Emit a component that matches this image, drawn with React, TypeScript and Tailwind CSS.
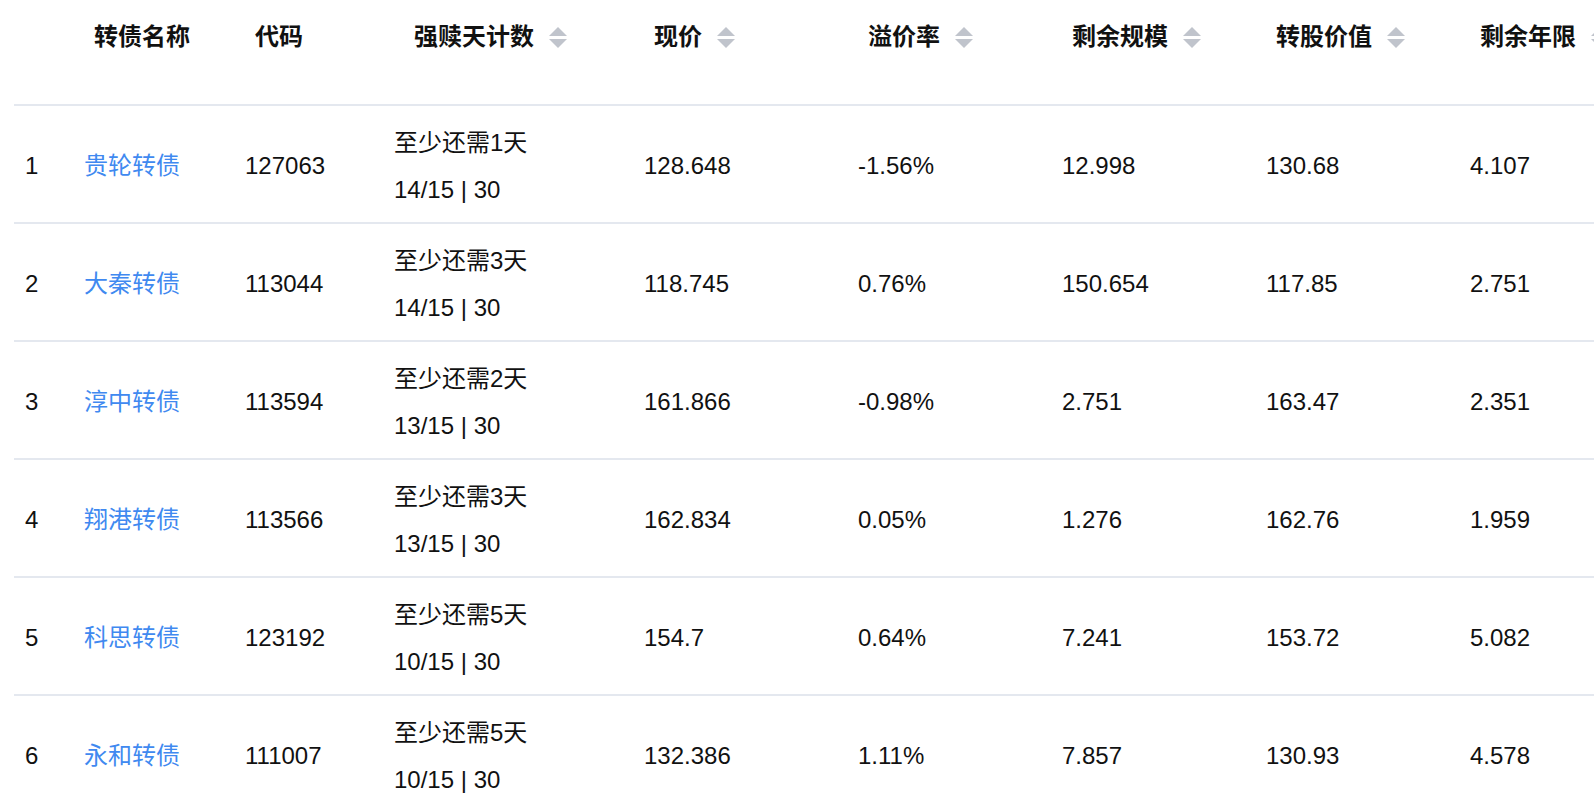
const rows = [
  { name: '贵轮转债', code: '127063', need: '至少还需1天', count: '14/15 | 30', price: '128.648', premium: '-1.56%', size: '12.998', value: '130.68', years: '4.107' },
  { name: '大秦转债', code: '113044', need: '至少还需3天', count: '14/15 | 30', price: '118.745', premium: '0.76%', size: '150.654', value: '117.85', years: '2.751' },
  { name: '淳中转债', code: '113594', need: '至少还需2天', count: '13/15 | 30', price: '161.866', premium: '-0.98%', size: '2.751', value: '163.47', years: '2.351' },
  { name: '翔港转债', code: '113566', need: '至少还需3天', count: '13/15 | 30', price: '162.834', premium: '0.05%', size: '1.276', value: '162.76', years: '1.959' },
  { name: '科思转债', code: '123192', need: '至少还需5天', count: '10/15 | 30', price: '154.7', premium: '0.64%', size: '7.241', value: '153.72', years: '5.082' },
  { name: '永和转债', code: '111007', need: '至少还需5天', count: '10/15 | 30', price: '132.386', premium: '1.11%', size: '7.857', value: '130.93', years: '4.578' },
]

const cols = 'grid grid-cols-[59px_161px_149px_250px_214px_204px_204px_204px_204px]'

function SortCaret() {
  return (
    <span className="ml-[15px] inline-flex flex-col items-center gap-[3px]">
      <span className="block h-0 w-0 border-x-[9px] border-b-[9px] border-x-transparent border-b-[#c0c4cc]" />
      <span className="block h-0 w-0 border-x-[9px] border-t-[9px] border-x-transparent border-t-[#c0c4cc]" />
    </span>
  )
}

function HeadCell({ label, sort = false, pad = 'pl-[21px]' }: { label: string; sort?: boolean; pad?: string }) {
  return (
    <div className={`flex items-center ${pad} h-[74px] whitespace-nowrap`}>
      <span>{label}</span>
      {sort && <SortCaret />}
    </div>
  )
}

export default function App() {
  return (
    <div
      className="w-[1594px] h-[808px] overflow-hidden bg-white text-[#111] text-[24px]"
      style={{ fontFamily: '"Liberation Sans", "Noto Sans CJK SC", sans-serif' }}
    >
      <div className="ml-[14px] w-max">
        <div className={`${cols} h-[106px] border-b-2 border-[#e4e8ef] font-semibold items-start`}>
          <div />
          <HeadCell label="转债名称" />
          <HeadCell label="代码" />
          <HeadCell label="强赎天计数" sort pad="pl-[31px]" />
          <HeadCell label="现价" sort />
          <HeadCell label="溢价率" sort />
          <HeadCell label="剩余规模" sort />
          <HeadCell label="转股价值" sort />
          <HeadCell label="剩余年限" sort />
        </div>
        {rows.map((r, i) => (
          <div key={r.code} className={`${cols} h-[118px] pt-[4px] border-b-2 border-[#e4e8ef] items-center`}>
            <div className="pl-[11px]">{i + 1}</div>
            <div className="pl-[11px]">
              <a className="text-[#4089f0] cursor-pointer">{r.name}</a>
            </div>
            <div className="pl-[11px]">{r.code}</div>
            <div className="pl-[11px] leading-[47px]">
              <div>{r.need}</div>
              <div>{r.count}</div>
            </div>
            <div className="pl-[11px]">{r.price}</div>
            <div className="pl-[11px]">{r.premium}</div>
            <div className="pl-[11px]">{r.size}</div>
            <div className="pl-[11px]">{r.value}</div>
            <div className="pl-[11px]">{r.years}</div>
          </div>
        ))}
      </div>
    </div>
  )
}
